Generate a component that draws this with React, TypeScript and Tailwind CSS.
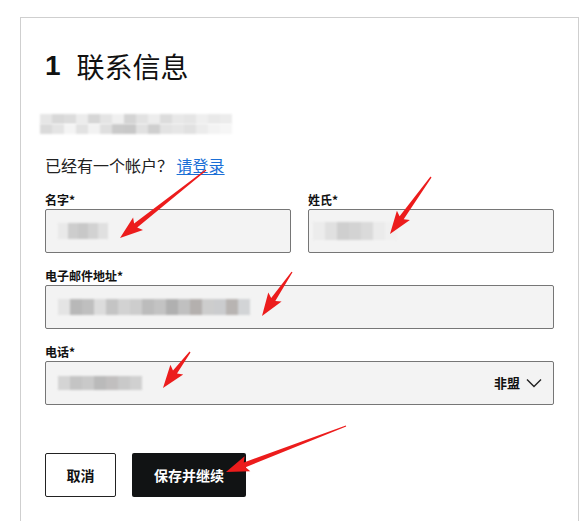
import React from "react";

const cjk = { fontFamily: '"Noto Sans CJK SC", "Liberation Sans", sans-serif' };

// pixelated blurred placeholder, like the mosaic in the screenshot
function Mosaic({ shades, cell = 12, h = 14 }: { shades: string[]; cell?: number; h?: number }) {
  return (
    <div className="flex blur-[1px]">
      {shades.map((c, i) => (
        <div key={i} style={{ background: c, width: cell, height: h }} />
      ))}
    </div>
  );
}

function Arrow({ x1, y1, x2, y2 }: { x1: number; y1: number; x2: number; y2: number }) {
  const dx = x2 - x1;
  const dy = y2 - y1;
  const len = Math.hypot(dx, dy);
  const ux = dx / len;
  const uy = dy / len;
  const nx = -uy;
  const ny = ux;
  const head = 20;
  const bx = x2 - ux * head;
  const by = y2 - uy * head;
  const p = (x: number, y: number) => `${x.toFixed(1)},${y.toFixed(1)}`;
  const pts = [
    p(x1 + nx * 0.6, y1 + ny * 0.6),
    p(bx + nx * 2.5, by + ny * 2.5),
    p(bx - ux * 3 + nx * 8, by - uy * 3 + ny * 8),
    p(x2, y2),
    p(bx - ux * 3 - nx * 8, by - uy * 3 - ny * 8),
    p(bx - nx * 2.5, by - ny * 2.5),
    p(x1 - nx * 0.6, y1 - ny * 0.6),
  ].join(" ");
  return <polygon points={pts} fill="#ec1c1c" />;
}

function Field({ label, children, className = "" }: { label: string; children?: React.ReactNode; className?: string }) {
  return (
    <div className={className}>
      <div className="text-[12px] leading-4 font-semibold text-[#111]">{label}</div>
      <div className="mt-[1px] h-[44px] bg-[#f3f3f3] border border-[#767676] rounded-[2px] flex items-center px-3">
        {children}
      </div>
    </div>
  );
}

export default function App() {
  return (
    <div className="relative w-[584px] h-[521px] overflow-hidden bg-white" style={cjk}>
      <div className="ml-[20px] mt-[17px] w-[559px] h-[520px] border border-[#cfcfcf] border-b-0 px-6 pt-[30px]">
        <h1 className="h-9 flex items-center text-[28px] text-[#111]">
          <span className="font-bold" style={{ fontFamily: '"Liberation Sans", sans-serif' }}>1</span>
          <span className="ml-[16px]">联系信息</span>
        </h1>

        <div className="mt-[29px] -ml-[5px] h-[22px] flex flex-col justify-center">
          <Mosaic
            h={10}
            cell={12}
            shades={["#e6e6e6", "#d8d8d8", "#dcdcdc", "#ececec", "#d6d6d6", "#e4e4e4", "#f0f0f0", "#d4d4d4", "#e2e2e2", "#ededed", "#dcdcdc", "#e8e8e8", "#e5e5e5", "#efefef", "#e9e9e9", "#ececec"]}
          />
          <Mosaic
            h={10}
            cell={12}
            shades={["#dadada", "#e4e4e4", "#f4f4f4", "#e2e2e2", "#f2f2f2", "#dfdfdf", "#cacaca", "#c8c8c8", "#e1e1e1", "#cfcfcf", "#e3e3e3", "#e6e6e6", "#e1e1e1", "#ececec", "#f3f3f3", "#f6f6f6"]}
          />
        </div>

        <div className="mt-[18px] text-[16px] leading-6 text-[#222]">
          已经有一个帐户？ <a className="text-[#1a6fd6] underline underline-offset-2">请登录</a>
        </div>

        <div className="mt-[15px] grid grid-cols-2 gap-[17px]">
          <Field label="名字*">
            <Mosaic cell={10} h={16} shades={["#e9e9e9", "#cdcdcd", "#c8c8c8", "#d2d2d2", "#e0e0e0"]} />
          </Field>
          <Field label="姓氏*">
            <div className="-ml-2">
              <Mosaic cell={12} h={18} shades={["#ececec", "#e0e0e0", "#cfcfcf", "#d3d3d3", "#dadada", "#ebebeb", "#f0f0f0"]} />
            </div>
          </Field>
        </div>

        <Field label="电子邮件地址*" className="mt-[15px]">
          <Mosaic
            cell={12}
            h={16}
            shades={["#e4e4e4", "#b8b8b8", "#bfbfbf", "#dcdcdc", "#c4c4c4", "#d2d2d2", "#cdcdcd", "#bcbcbc", "#c3c3c3", "#b0b0b0", "#c0c0c0", "#b4b0ae", "#cdcdcd", "#cbccce", "#b8b4b2", "#d2d4d6"]}
          />
        </Field>

        <Field label="电话*" className="mt-[15px]">
          <div className="flex-1">
            <Mosaic cell={12} h={14} shades={["#d4d4d4", "#c4c4c4", "#c9c9c9", "#bababa", "#c1bfbf", "#c9c9c9", "#d0d0d0"]} />
          </div>
          <span className="text-[13px] font-bold text-[#111]">非盟</span>
          <svg width="16" height="10" viewBox="0 0 16 10" className="ml-[6px] mr-[-1px]" fill="none">
            <polyline points="1,1.5 8,8.5 15,1.5" stroke="#222" strokeWidth="1.4" />
          </svg>
        </Field>

        <div className="mt-[48px] flex gap-4">
          <button className="h-[44px] w-[71px] border border-[#222] rounded-[2px] bg-white text-[14px] font-bold text-[#111]">
            取消
          </button>
          <button className="h-[44px] w-[114px] rounded-[2px] bg-[#111314] text-[14px] font-bold text-white">
            保存并继续
          </button>
        </div>
      </div>

      <svg className="absolute inset-0 pointer-events-none" width={584} height={521}>
        <Arrow x1={206} y1={170} x2={120} y2={238} />
        <Arrow x1={431} y1={177} x2={390} y2={234} />
        <Arrow x1={292} y1={272} x2={262} y2={316} />
        <Arrow x1={190} y1={352} x2={163} y2={388} />
        <Arrow x1={346} y1={426} x2={226} y2={472} />
      </svg>
    </div>
  );
}
